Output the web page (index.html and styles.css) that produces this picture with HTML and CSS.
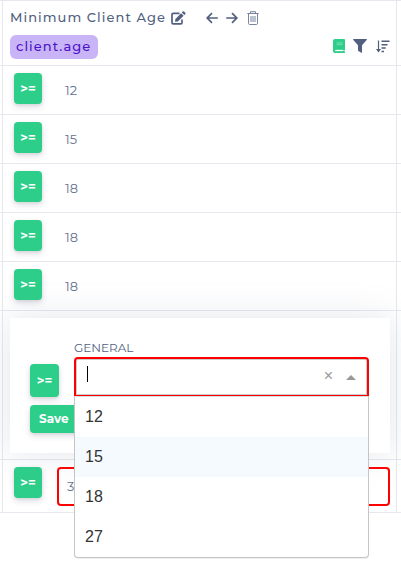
FILE: index.html
```
<!DOCTYPE html>
<html lang="en">
<head>
<meta charset="utf-8">
<title>Minimum Client Age</title>
<link rel="stylesheet" href="styles.css">
</head>
<body>
<main class="table">
  <header class="row head"><div class="cell">
    <div class="title-line">
      <span class="title">Minimum Client Age</span>
      <svg class="edit" width="15" height="14" viewBox="0 0 15 14"><path d="M8.5 2.3H2.2Q1 2.3 1 3.5v8.2q0 1.2 1.2 1.2h7.6q1.2 0 1.2-1.2V8.5" fill="none" stroke="currentColor" stroke-width="1.7"/><path d="M4 10.8l.4-2.9 5.7-5.7 2.5 2.5-5.7 5.7zM10.8 1.5l1-1q.6-.6 1.2 0l1.3 1.3q.6.6 0 1.2l-1 1z" fill="currentColor"/></svg>
      <svg class="arrow-left" width="12" height="12" viewBox="0 0 12 12"><path d="M6 1.2L1.2 6 6 10.8M1.3 6h10.5" fill="none" stroke="currentColor" stroke-width="1.7"/></svg>
      <svg class="arrow-right" width="12" height="12" viewBox="0 0 12 12"><path d="M6 1.2L10.8 6 6 10.8M10.7 6H.2" fill="none" stroke="currentColor" stroke-width="1.7"/></svg>
      <svg class="trash" width="12" height="14" viewBox="0 0 12 14"><path d="M.3 2.5h11.4M3.5 2.5V.7h5v1.8M1.5 2.5v9.8q0 1.2 1.2 1.2h6.6q1.2 0 1.2-1.2V2.5M4 5v6M6 5v6M8 5v6" fill="none" stroke="currentColor" stroke-width="1"/></svg>
    </div>
    <div class="tag-line">
      <span class="tag">client.age</span>
      <svg class="book" width="12" height="14" viewBox="0 0 12 14"><path d="M2 0H11q1 0 1 1v9.5l-.5.7v1.6l.5.3V14H2Q0 14 0 12V2Q0 0 2 0z" fill="#2dce89"/><path d="M3.5 3.9h6M3.5 5.6h6" stroke="#8ae5bd" stroke-width=".8"/><path d="M2.2 11.5h8.3" stroke="#fff" stroke-width="1.3"/></svg>
      <svg class="filter" width="14" height="14" viewBox="0 0 14 14"><path d="M.6 0h12.8q.9.4.3 1.1L9 6.2v7q-.3 1-1.1.4L5.4 12q-.4-.3-.4-.8v-5L.3 1.1Q-.2.3.6 0z" fill="currentColor"/></svg>
      <svg class="sort" width="14" height="13" viewBox="0 0 14 13"><path d="M2.5.5v10" stroke="currentColor" stroke-width="1.2"/><path d="M5.5 1.3h8M5.5 4.7h6M5.5 8h4.2M5.5 11.5h2.5" fill="none" stroke="currentColor" stroke-width="1.5"/><path d="M0 9h5L2.5 12.5z" fill="currentColor"/></svg>
    </div>
  </div></header>
  <div class="row"><div class="cell entry"><button class="op">&gt;=</button><span class="value">12</span></div></div>
  <div class="row"><div class="cell entry"><button class="op">&gt;=</button><span class="value">15</span></div></div>
  <div class="row"><div class="cell entry"><button class="op">&gt;=</button><span class="value">18</span></div></div>
  <div class="row"><div class="cell entry"><button class="op">&gt;=</button><span class="value">18</span></div></div>
  <div class="row"><div class="cell entry"><button class="op">&gt;=</button><span class="value">18</span></div></div>
  <div class="row editing"><div class="cell">
    <section class="panel">
      <div class="actions">
        <button class="op op-large">&gt;=</button>
        <button class="save">Save</button>
      </div>
      <div class="field">
        <div class="label">GENERAL</div>
        <div class="select">
          <span class="caret"></span><span class="clear">×</span>
          <svg width="10" height="5" viewBox="0 0 10 5"><path d="M5 0l5 5H0z" fill="#999"/></svg>
          <div class="menu">
            <div class="option">12</div>
            <div class="option active">15</div>
            <div class="option">18</div>
            <div class="option">27</div>
          </div>
        </div>
      </div>
    </section>
  </div></div>
  <div class="row last"><div class="cell entry"><button class="op">&gt;=</button><div class="invalid">3</div></div></div>
</main>
</body>
</html>
```
FILE: styles.css
```
* { box-sizing: border-box; }
body { margin: 0; min-height: 562px; background: #fff; color: #525f7f; font-family: Montserrat, Inter, sans-serif; }
svg { display: block; flex: none; }
button { border: 0; padding: 0 0 2px; background: #2dce89; color: #fff; font: 700 13px Montserrat, Inter, sans-serif; border-radius: 4px; box-shadow: 0 3px 6px rgba(50,50,93,.16), 0 1px 3px rgba(0,0,0,.08); }
.table { border-bottom: 1px solid #e6e8ee; }
.row { height: 49px; border-top: 1px solid #e6e8ee; padding: 0 4px 0 2px; }
.cell { height: 100%; border: solid #e6e8ee; border-width: 0 1px; }
.head { height: 65px; }
.head .cell { padding: 8px 6px 0 7px; }
.title-line { display: flex; align-items: center; height: 17px; }
.title { width: 161px; margin-top: -2px; font-size: 13px; font-weight: 500; letter-spacing: 1.06px; white-space: nowrap; }
.arrow-left { margin-left: 20px; }
.arrow-right { margin-left: 8px; }
.trash { margin-left: 9px; color: #7a84a0; }
.tag-line { display: flex; align-items: center; margin-top: 9px; height: 24px; }
.tag { width: 88px; height: 24px; padding-left: 6px; border-radius: 6px; background: #c8b4f6; color: #4b12c8; font-size: 13px; font-weight: 500; line-height: 23px; letter-spacing: 1.06px; }
.book { margin-left: auto; margin-top: -2px; }
.filter { margin-left: 8px; margin-top: -2px; }
.sort { margin-left: 9px; margin-top: -2px; }
.entry { display: flex; align-items: flex-start; padding: 7px 6px 0 11px; }
.op { width: 28px; height: 31px; flex: none; }
.value { margin: 9px 0 0 23px; font-size: 13px; line-height: 16px; color: #66718f; font-weight: 400; }
.editing { height: 149px; }
.editing .cell { padding: 7px 6px 0 7px; }
.panel { position: relative; z-index: 1; display: flex; height: 135px; padding: 22px 21px 0 20px; background: #fff; box-shadow: 0 0 32px rgba(136,152,170,.24); }
.actions { width: 44px; padding-top: 24px; flex: none; }
.op-large { display: block; width: 29px; height: 33px; }
.save { display: block; width: 60px; height: 28px; margin-top: 8px; padding: 0 0 1px 9px; text-align: left; font-size: 12px; }
.field { flex: 1; }
.label { height: 17px; font-size: 12px; line-height: 15px; }
.select { position: relative; display: flex; align-items: center; height: 39px; padding: 0 11px 0 11px; border: 2px solid red; border-bottom-width: 1px; border-radius: 4px 4px 0 0; box-shadow: inset 0 0 0 1px #ccc; }
.caret { width: 1px; height: 16px; margin-bottom: 6px; background: #000; }
.clear { margin: 0 13px 2px auto; color: #999; font: 16px/18px "Liberation Sans", sans-serif; }
.menu { position: absolute; left: -2px; top: 37px; width: 295px; height: 162px; border: 1px solid #c5c5c5; border-top-color: #ddd; border-radius: 0 0 4px 4px; background: #fff; box-shadow: 0 1px 0 rgba(0,0,0,.06); }
.option { height: 40px; padding-left: 10px; color: #333; font: 16px/40px "Liberation Sans", sans-serif; }
.active { background: #f5faff; }
.last { height: 53px; }
.invalid { flex: 1; height: 39px; margin-left: 15px; padding-left: 8px; border: 2px solid red; border-radius: 4px; font-size: 13px; font-weight: 400; line-height: 35px; color: #66718f; }
```
